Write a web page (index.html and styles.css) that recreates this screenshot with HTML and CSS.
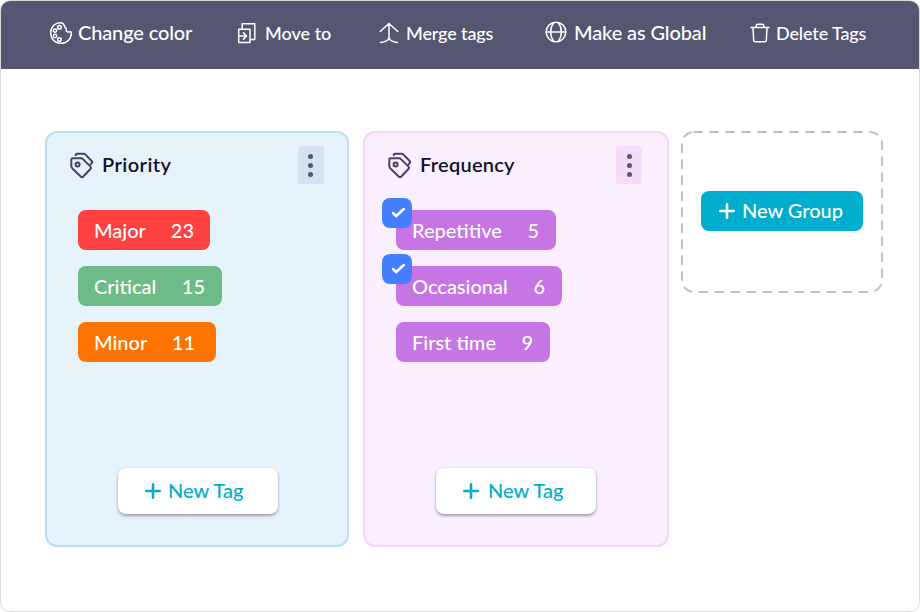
FILE: index.html
```html
<!DOCTYPE html>
<html lang="en">
<head>
<meta charset="utf-8">
<title>Tag groups</title>
<link rel="stylesheet" href="styles.css">
</head>
<body>
<svg class="defs" width="0" height="0" aria-hidden="true">
  <symbol id="tags" viewBox="0 0 24 28">
    <path d="M5.7 3.2V3Q5.7 1.7 7 1.7H13.5Q14.5 1.7 15.2 2.4L21.5 8.7Q22.8 10 21.6 11.3L20.8 12.2M2.8 6.2H10.9Q11.9 6.2 12.6 6.9L20.3 14.4Q21.7 15.7 20.4 17L13.3 24.5Q12 25.8 10.7 24.5L2.7 16.8Q1.3 15.5 1.3 14V7.7Q1.3 6.2 2.8 6.2Z"/>
    <circle cx="7.6" cy="12.4" r="2"/>
  </symbol>
  <symbol id="plus" viewBox="0 0 16 16"><path d="M8 1.3V14.7M1.3 8H14.7"/></symbol>
  <symbol id="check" viewBox="0 0 30 30"><path d="M11 15L14.2 18L21.8 11"/></symbol>
</svg>
<div class="window">
  <header class="toolbar">
    <div class="action">
      <svg class="icon" width="24" height="24" viewBox="0 0 24 24"><path d="M12.3 1.7C6.3 1.2 1.7 5.8 1.7 12S6.2 22.3 12 22.3C17.8 22.3 22.2 18 22.3 12.2C22.4 10.6 21.7 10.5 20.5 10.9C18.6 11.5 17 10.5 17.3 8.5C17.5 7.2 16.5 7 16 6.1C15.4 4.8 15.1 2.2 12.3 1.7Z"/><circle cx="10.4" cy="6.3" r="1.8"/><circle cx="6" cy="9.6" r="1.7"/><circle cx="6" cy="15" r="1.7"/><circle cx="10.4" cy="18.5" r="1.8"/></svg>
      <span>Change color</span>
    </div>
    <div class="action small move">
      <svg class="icon" width="20" height="22" viewBox="0 0 20 22"><path d="M5.2 7V1.7H17.8V17.5H13.5M1.7 7.2H13V20.6H1.7ZM1.7 14H9M6.5 10.9L9.6 14L6.5 17.1"/></svg>
      <span>Move to</span>
    </div>
    <div class="action small merge">
      <svg class="icon" width="20" height="22" viewBox="0 0 20 22"><path d="M1.2 9.5L10 1.5L18.8 9.5M10 1.5V15.2M1.5 20.5C6.5 20 9.7 18.5 10 15.2C10.3 18.5 13.5 20 18.5 20.5"/></svg>
      <span>Merge tags</span>
    </div>
    <div class="action global">
      <svg class="icon" width="22" height="22" viewBox="0 0 22 22"><circle cx="11" cy="11" r="9.8"/><path d="M1 11H21M8.8 1.5C4.6 7 4.6 15 8.8 20.5M13.2 1.5C17.4 7 17.4 15 13.2 20.5"/></svg>
      <span>Make as Global</span>
    </div>
    <div class="action small">
      <svg class="icon trash" width="20" height="20" viewBox="0 0 20 20"><path d="M1 4.5H19M6.2 4.3V2.5Q6.2 1.2 7.5 1.2H12.5Q13.8 1.2 13.8 2.5V4.3M3 4.7L3.7 17.5Q3.8 18.8 5.1 18.8H14.9Q16.2 18.8 16.3 17.5L17 4.7"/></svg>
      <span>Delete Tags</span>
    </div>
  </header>
  <main class="board">
    <section class="group priority">
      <div class="group-head">
        <svg class="tags-icon" width="24" height="28"><use href="#tags"/></svg>
        <h2>Priority</h2>
        <button class="menu" aria-label="Group menu"><i></i><i></i><i></i></button>
      </div>
      <ul class="tags">
        <li class="tag major"><span>Major</span><span>23</span></li>
        <li class="tag critical"><span>Critical</span><span>15</span></li>
        <li class="tag minor"><span>Minor</span><span>11</span></li>
      </ul>
      <button class="new-tag"><svg class="plus" width="16" height="16"><use href="#plus"/></svg><span>New Tag</span></button>
    </section>
    <section class="group frequency">
      <div class="group-head">
        <svg class="tags-icon" width="24" height="28"><use href="#tags"/></svg>
        <h2>Frequency</h2>
        <button class="menu" aria-label="Group menu"><i></i><i></i><i></i></button>
      </div>
      <ul class="tags">
        <li class="tag repetitive"><svg class="check"><use href="#check"/></svg><span>Repetitive</span><span>5</span></li>
        <li class="tag occasional"><svg class="check"><use href="#check"/></svg><span>Occasional</span><span>6</span></li>
        <li class="tag first"><span>First time</span><span>9</span></li>
      </ul>
      <button class="new-tag"><svg class="plus" width="16" height="16"><use href="#plus"/></svg><span>New Tag</span></button>
    </section>
    <section class="empty-group">
      <svg class="outline" width="202" height="162"><rect x="1" y="1" width="200" height="160" rx="12"/></svg>
      <button class="new-group"><svg class="plus" width="16" height="16"><use href="#plus"/></svg><span>New Group</span></button>
    </section>
  </main>
</div>
</body>
</html>
```
FILE: styles.css
```css
* { box-sizing: border-box; }
body { margin: 0; background: #fff; font: 500 20px/24px Lato, "Liberation Sans", sans-serif; }
svg { flex: none; fill: none; stroke: currentColor; stroke-linecap: round; stroke-linejoin: round; }
.defs { position: absolute; }
button { border: 0; padding: 0; font: inherit; }
.window { height: 612px; border: 1px solid #d9dada; border-radius: 10px; overflow: hidden; }
.toolbar {
  display: grid;
  grid-template-columns: 188px 142px 166px 205px 130px;
  height: 68px;
  padding: 0 0 4px 48px;
  align-items: center;
  background: #555672;
  color: #fff;
  letter-spacing: -0.13px;
}
.action { display: flex; align-items: center; gap: 5px; white-space: nowrap; }
.action span { padding-bottom: 2px; }
.action.small { gap: 6px; font-size: 18px; }
.action.small span { padding-bottom: 1px; }
.action.move, .action.merge { gap: 7px; }
.action.move { gap: 8px; letter-spacing: 0; }
.action.global { gap: 7px; }
.action.global .icon { margin-top: -2px; }
.icon { stroke-width: 1.5; }
.board { display: flex; align-items: flex-start; padding: 62px 0 0 44px; }
.group {
  display: flex;
  flex-direction: column;
  width: 304px;
  height: 416px;
  padding: 13px 23px 31px;
  border: 2px solid #b8dff2;
  border-radius: 12px;
  background: #e6f3fa;
}
.frequency { width: 306px; margin: 0 12px 0 14px; border-color: #f8d3fa; background: #faeffe; }
.group-head { display: flex; align-items: center; height: 38px; color: #11112f; }
.tags-icon { margin: 1px 8px 0 0; color: #424268; stroke-width: 2; }
.frequency .tags-icon { margin-right: 8px; }
h2 { margin: 0; padding-bottom: 2px; font-size: 20px; font-weight: 600; letter-spacing: 0.25px; }
.priority h2 { letter-spacing: 0.45px; }
.menu {
  display: flex;
  flex-direction: column;
  align-items: center;
  justify-content: center;
  gap: 4px;
  width: 26px;
  height: 38px;
  margin-left: auto;
  padding-right: 1px;
  border-radius: 3px;
  background: #d4e3f0;
}
.frequency .menu { margin-right: 2px; padding-right: 0; background: #f5dcf9; }
.menu i { width: 5px; height: 5px; border-radius: 50%; background: #555672; }
.tags { display: flex; flex-direction: column; align-items: flex-start; gap: 16px; margin: 26px 0 0; padding: 0 0 0 8px; list-style: none; }
.tag {
  position: relative;
  display: flex;
  align-items: center;
  justify-content: space-between;
  height: 40px;
  padding: 0 17px 1px 16px;
  border-radius: 8px;
  background: #c775e4;
  color: #fff;
}
.major { width: 132px; padding-right: 16px; background: #ff4141; }
.critical { width: 144px; background: #6dbb86; }
.minor { width: 138px; padding-right: 21px; background: #ff7400; }
.repetitive { width: 160px; }
.occasional { width: 166px; }
.first { width: 154px; }
.check {
  position: absolute;
  left: -14px;
  top: -12px;
  width: 30px;
  height: 30px;
  border-radius: 8px;
  background: #447fff;
  stroke-width: 2.5;
}
.new-tag {
  display: flex;
  align-items: center;
  width: 160px;
  height: 46px;
  margin: auto 0 0 48px;
  padding-left: 27px;
  gap: 7px;
  border-radius: 8px;
  background: #fff;
  box-shadow: 0 2px 3px #55567280, 0 0 2px #55567226;
  color: #00adcb;
}
.frequency .new-tag { gap: 9px; }
.new-tag span, .new-group span { padding-bottom: 2px; }
.plus { stroke-width: 2.6; }
.empty-group { position: relative; display: flex; align-items: center; justify-content: center; width: 202px; height: 160px; }
.outline { position: absolute; left: 0; top: 0; color: #bfbdd0; stroke-width: 2; stroke-dasharray: 8 8; stroke-linecap: round; }
.new-group {
  display: flex;
  align-items: center;
  justify-content: center;
  gap: 7px;
  width: 162px;
  height: 40px;
  padding-right: 2px;
  border-radius: 8px;
  background: #00adcf;
  color: #fff;
}
```
